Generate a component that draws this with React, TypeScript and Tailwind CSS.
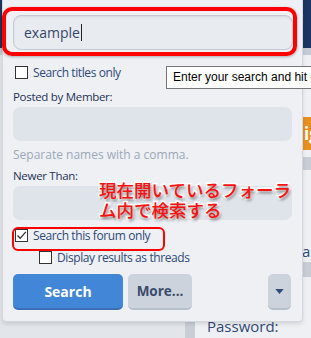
import React from "react";

function Box({ checked }: { checked?: boolean }) {
  return (
    <span className="relative inline-block w-[13px] h-[13px] shrink-0 bg-white border border-[#333]">
      {checked && (
        <svg viewBox="0 0 13 13" className="absolute left-[-1px] top-[-1px] w-[13px] h-[13px]">
          <path d="M2.5 6.5 L5.2 9.3 L10.8 2.8" fill="none" stroke="#333" strokeWidth="1.3" />
        </svg>
      )}
    </span>
  );
}

export default function App() {
  const ui = "font-['Open_Sans','Noto_Sans',sans-serif]";
  return (
    <div className={`relative w-[311px] h-[338px] overflow-hidden bg-[#e2e5ea] ${ui}`}>
      {/* background page */}
      <div className="h-[48px] bg-[#1c3562]" />
      <div className="h-[7px] bg-[#c6ccd5]" />
      <div className="flex">
        <div className="w-[185px] shrink-0 h-[283px] bg-[#e2e5ea]" />
        <div className="w-[10px] shrink-0 h-[283px] bg-[#c9ced6]" />
        <div className="flex-1 min-w-0 overflow-hidden h-[283px] bg-[#eef0f3] flex flex-col">
          <div className="h-[62px] shrink-0" />
          <div className="ml-[108px] h-[33px] shrink-0 bg-[#e8901f] text-white font-bold text-[17px] leading-[33px] pl-[1px] overflow-hidden whitespace-nowrap">
            ign up
          </div>
          <div className="h-[7px] shrink-0" />
          <div className="h-[13px] shrink-0 bg-[#c9ced6]" />
          <div className="h-[72px] shrink-0" />
          <div className="ml-[107px] shrink-0 text-[15px] text-[#2e4a75] leading-[18px] whitespace-nowrap">ame</div>
          <div className="h-[15px] shrink-0 bg-[#c9ced6] mt-[2px]" />
          <div className="h-[40px] shrink-0" />
          <div className="ml-[12px] shrink-0 text-[15px] text-[#2e4a75] leading-[18px] whitespace-nowrap">Password:</div>
        </div>
      </div>

      {/* popup panel */}
      <div className="absolute left-[2px] top-[-10px] w-[301px] h-[332px] bg-[#eef0f4] border border-[#d3d8e0] rounded-b-[4px] shadow-[0_2px_4px_rgba(0,0,0,0.12)]">
        <div className="pl-[10px] pr-[10px] pt-[24px]">
          <div className="h-[35px] w-[280px] rounded-[8px] bg-[#e8ebf0] border border-[#c3c9d2] shadow-[inset_0_1px_2px_rgba(0,0,0,0.08)] flex items-center pl-[10px] text-[14px] text-[#34476b]">
            example<span className="inline-block w-[1px] h-[17px] bg-[#222] ml-[1px]" />
          </div>
          <div className="mt-[16px] flex items-center gap-[5px] pl-[2px] h-[13px] text-[12px] tracking-[-0.4px] text-[#2d4a7a]">
            <Box />
            <span>Search titles only</span>
          </div>
          <div className="mt-[10px] text-[11.5px] tracking-[-0.3px] text-[#1e3357] leading-[16px]">Posted by Member:</div>
          <div className="mt-[2px] h-[34px] w-[279px] rounded-[7px] bg-[#dfe3ea]" />
          <div className="mt-[5px] text-[12px] text-[#9ca8ba] leading-[18px]">Separate names with a comma.</div>
          <div className="mt-[4px] text-[11.5px] tracking-[-0.3px] text-[#1e3357] leading-[16px]">Newer Than:</div>
          <div className="mt-[2px] h-[34px] w-[279px] rounded-[7px] bg-[#dfe3ea]" />
          <div className="mt-[9px] flex items-center gap-[5px] pl-[2px] h-[13px] text-[12px] tracking-[-0.4px] text-[#2d4a7a]">
            <Box checked />
            <span>Search this forum only</span>
          </div>
          <div className="mt-[9px] flex items-center gap-[5px] pl-[26px] h-[13px] text-[12px] tracking-[-0.4px] text-[#2d4a7a]">
            <Box />
            <span>Display results as threads</span>
          </div>
          <div className="mt-[10px] flex h-[36px]">
            <div className="w-[110px] rounded-[5px] bg-[#4286d7] border-b-[2px] border-[#3a70b5] text-white font-bold text-[14px] flex items-center justify-center">
              Search
            </div>
            <div className="ml-[5px] w-[64px] rounded-[5px] bg-[#ccd3dd] border-b-[2px] border-[#b7bfcb] text-[#3a4c6c] font-bold text-[13.5px] flex items-center justify-center">
              More...
            </div>
            <div className="ml-auto mr-[1px] w-[23px] rounded-[5px] bg-[#ccd3dd] border-b-[2px] border-[#b7bfcb] flex items-center justify-center">
              <svg viewBox="0 0 10 6" className="w-[9px] h-[5px]">
                <path d="M0 0 L10 0 L5 6 Z" fill="#2c4a7a" />
              </svg>
            </div>
          </div>
        </div>
      </div>

      {/* red highlight around search input */}
      <div className="absolute left-[2px] top-[7px] w-[295px] h-[49px] border-[4px] border-[#ff0000] rounded-[10px] shadow-[0_1px_3px_rgba(0,0,0,0.3)]" />

      {/* red highlight around forum-only checkbox */}
      <div className="absolute left-[12px] top-[227px] w-[153px] h-[24px] border-[2px] border-[#ff0000] rounded-[6px]" />

      {/* tooltip */}
      <div className="absolute left-[166px] top-[66px] h-[23px] pl-[6px] pr-[2px] bg-white border border-[#767676] text-[12px] text-black leading-[21px] whitespace-nowrap font-['Liberation_Sans',sans-serif]">
        Enter your search and hit enter
      </div>

      {/* annotation */}
      <div className="absolute left-[99px] top-[180px] w-[200px] text-[17.5px] leading-[20px] font-medium text-[#ff1010] font-['Noto_Sans_CJK_JP',sans-serif] [paint-order:stroke_fill] [-webkit-text-stroke:3px_white] [text-shadow:1px_2px_3px_rgba(0,0,0,0.55)]">
        現在開いているフォーラム内で検索する
      </div>
    </div>
  );
}
